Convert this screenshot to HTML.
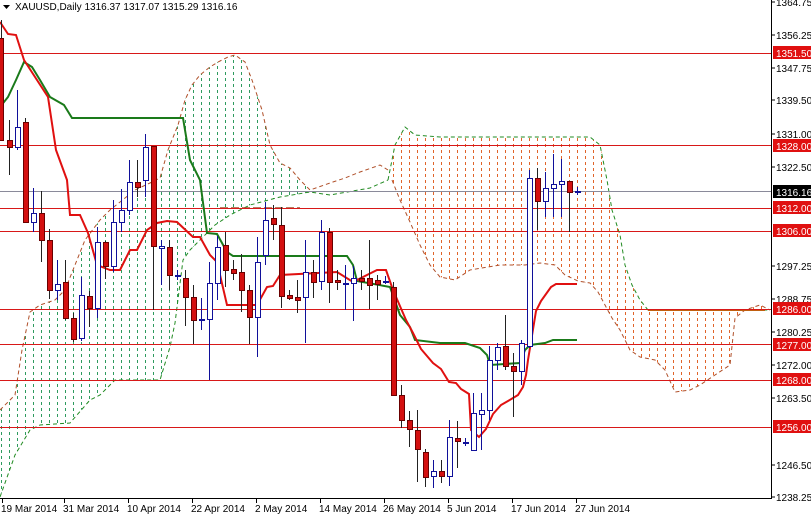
<!DOCTYPE html>
<html><head><meta charset="utf-8"><style>
html,body{margin:0;padding:0;background:#fff;}
svg{display:block;font-family:"Liberation Sans",sans-serif;}
</style></head><body>
<svg width="811" height="516" viewBox="0 0 811 516" xmlns="http://www.w3.org/2000/svg">
<defs>
<pattern id="pg" x="0" y="0" width="8" height="6" patternUnits="userSpaceOnUse"><rect x="1" y="0" width="1" height="3" fill="#2e9a5e"/></pattern>
<pattern id="pr" x="0" y="0" width="8" height="6" patternUnits="userSpaceOnUse"><rect x="1" y="0" width="1" height="3" fill="#e0642a"/></pattern>
</defs>
<rect width="811" height="516" fill="#fff"/>
<polygon fill="url(#pg)" points="0,410 15,395 22,350 30,312 40,305 55,300 65,290 75,265 85,240 100,220 110,210 135,190 150,183 160,178 168,150 178,125 185,100 192,85 200,75 210,67 218,62 228,57 235,55 245,62 252,80 262,110 270,145 280,163 290,168 300,180 310,190 310,192 280,197 250,205 230,215 215,225 200,240 190,250 183,260 175,323 170,347 160,380 115,380 100,395 90,400 70,423 40,425 30,430 15,455 0,497"/>
<polygon fill="url(#pr)" points="388,180 395,145 405,127 415,135 440,137 590,137 600,145 607,180 612,210 620,235 625,265 632,285 640,300 648,310 770,310 760,305 745,310 735,318 730,365 715,375 700,385 690,390 675,392 665,370 655,360 640,357 630,350 620,330 612,318 605,305 598,292 590,283 578,281 565,275 555,265 540,263 525,265 500,265 470,270 455,280 440,277 430,265 420,245 410,222 400,200 392,180"/>
<g fill="none" stroke-width="1" stroke-dasharray="4,3">
<polyline stroke="#b0502a" points="0,410 15,395 22,350 30,312 40,305 55,300 65,290 75,265 85,240 100,220 110,210 135,190 150,183 160,178 168,150 178,125 185,100 192,85 200,75 210,67 218,62 228,57 235,55 245,62 252,80 262,110 270,145 280,163 290,168 300,180 310,190 330,183 345,178 360,172 380,165 388,170"/>
<polyline stroke="#228b22" points="0,497 15,455 30,430 40,425 70,423 90,400 100,395 115,380 160,380 170,347 175,323 183,260 190,250 200,240 215,225 230,215 250,205 280,197 310,192 330,195 370,188 388,180"/>
<polyline stroke="#228b22" points="388,180 395,145 405,127 415,135 440,137 590,137 600,145 607,180 612,210 620,235 625,265 632,285 640,300 648,310 770,310"/>
<polyline stroke="#b0502a" points="392,180 400,200 410,222 420,245 430,265 440,277 455,280 470,270 500,265 525,265 540,263 555,265 565,275 578,281 590,283 598,292 605,305 612,318 620,330 630,350 640,357 655,360 665,370 675,392 690,390 700,385 715,375 730,365 735,318 745,310 760,305 770,310"/>
</g>
<line x1="648" y1="310" x2="765" y2="310" stroke="#c06010" stroke-width="2"/>
<line x1="220" y1="208" x2="300" y2="208" stroke="#a0522d" stroke-width="1.5" stroke-dasharray="8,3"/>
<g fill="#d81818">
<rect x="0" y="53" width="771" height="1"/><rect x="0" y="145" width="771" height="1"/>
<rect x="0" y="208" width="771" height="1"/><rect x="0" y="231" width="771" height="1"/>
<rect x="0" y="309" width="771" height="1"/><rect x="0" y="344" width="771" height="1"/>
<rect x="0" y="380" width="771" height="1"/><rect x="0" y="427" width="771" height="1"/>
</g>
<rect x="0" y="191" width="771" height="1" fill="#8a8a9a"/>
<polyline fill="none" stroke="#1a7a1a" stroke-width="2" points="0,107 8,97 16,80 24,62 32,67 40,80 50,97 64,105 72,118 183,118 190,160 200,180 207,233 217,234 227,252 233,256 347,256 353,265 357,281 390,287 400,315 410,327 415,340 440,343 465,343 480,348 487,355 490,365 520,363 525,350 530,345 545,343 553,340 577,340"/>
<polyline fill="none" stroke="#e01010" stroke-width="2" points="0,22 8,34 16,35 24,60 48,97 56,150 67,180 70,215 80,215 88,233 97,265 110,270 120,270 130,250 137,250 147,230 157,223 167,221 177,222 193,237 200,237 210,255 217,262 227,305 257,305 267,287 273,286 280,275 337,272 353,282 377,270 386,270 393,290 406,320 413,333 421,349 433,363 441,369 449,382 456,383 461,389 469,394 471,430 479,437 486,429 493,414 501,405 508,401 518,395 523,387 526,375 528,360 536,311 541,301 551,287 556,284 577,284"/>
<g stroke-width="1">
<path stroke="#222" d="M1.5 20V140M9.5 120V175M25.5 118V222M41.5 191V262M49.5 229V299M65.5 260V320M73.5 313V342M89.5 291V327M105.5 241V279M137.5 160V197M153.5 146V310M169.5 240V290M185.5 270V326M193.5 285V344M225.5 232V287M233.5 260V280M241.5 254V312M249.5 285V344M273.5 205V240M281.5 207V308M289.5 290V300M297.5 280V313M313.5 260V298M329.5 228V303M337.5 270V290M361.5 270V290M369.5 240V309M377.5 275V300M393.5 282V395M401.5 385V428M409.5 411V447M417.5 410V482M425.5 449V487M441.5 460V483M457.5 421V468M505.5 315V370M513.5 353V417M537.5 168V230M569.5 181V232"/>
<path stroke="#10109a" d="M17.5 90V150M33.5 188V232M57.5 260V300M81.5 277V341M97.5 227V318M113.5 200V272M121.5 189V232M129.5 160V215M145.5 134V197M161.5 240V285M177.5 270V280M201.5 298V330M209.5 262V380M217.5 236V300M257.5 237V357M265.5 202V265M305.5 240V343M321.5 220V290M345.5 265V310M353.5 266V321M385.5 276V284M433.5 460V488M449.5 420V486M465.5 438V446M473.5 393V450M481.5 393V450M489.5 346V420M497.5 343V370M521.5 340V385M529.5 170V348M545.5 172V217M553.5 154V217M561.5 159V217M577.5 187V195"/>
</g>
<g fill="#d41010" stroke="#6a0000" stroke-width="1">
<rect x="-1.5" y="38.5" width="5" height="102"/><rect x="7.5" y="140.5" width="5" height="7"/><rect x="23.5" y="122.5" width="5" height="100"/><rect x="39.5" y="213.5" width="5" height="27"/><rect x="47.5" y="240.5" width="5" height="50"/><rect x="63.5" y="282.5" width="5" height="36"/><rect x="71.5" y="318.5" width="5" height="21"/><rect x="87.5" y="296.5" width="5" height="12"/><rect x="103.5" y="242.5" width="5" height="24"/><rect x="135.5" y="182.5" width="5" height="5"/><rect x="151.5" y="146.5" width="5" height="100"/><rect x="167.5" y="247.5" width="5" height="28"/><rect x="183.5" y="278.5" width="5" height="19"/><rect x="191.5" y="297.5" width="5" height="23"/><rect x="223.5" y="245.5" width="5" height="25"/><rect x="231.5" y="269.5" width="5" height="4"/><rect x="239.5" y="272.5" width="5" height="18"/><rect x="247.5" y="290.5" width="5" height="27"/><rect x="271.5" y="218.5" width="5" height="6"/><rect x="279.5" y="225.5" width="5" height="71"/><rect x="287.5" y="295.5" width="5" height="3"/><rect x="295.5" y="297.5" width="5" height="3"/><rect x="311.5" y="272.5" width="5" height="10"/><rect x="327.5" y="232.5" width="5" height="50"/><rect x="335.5" y="280.5" width="5" height="2"/><rect x="359.5" y="278.5" width="5" height="3"/><rect x="367.5" y="278.5" width="5" height="7"/><rect x="375.5" y="280.5" width="5" height="4"/><rect x="391.5" y="287.5" width="5" height="108"/><rect x="399.5" y="395.5" width="5" height="25"/><rect x="407.5" y="420.5" width="5" height="9"/><rect x="415.5" y="430.5" width="5" height="19"/><rect x="423.5" y="452.5" width="5" height="25"/><rect x="439.5" y="471.5" width="5" height="5"/><rect x="455.5" y="438.5" width="5" height="3"/><rect x="503.5" y="346.5" width="5" height="20"/><rect x="511.5" y="366.5" width="5" height="5"/><rect x="535.5" y="178.5" width="5" height="23"/><rect x="567.5" y="181.5" width="5" height="11"/>
</g>
<g fill="#fff" stroke="#10109a" stroke-width="1">
<rect x="15.5" y="127.5" width="5" height="20"/><rect x="31.5" y="213.5" width="5" height="9"/><rect x="55.5" y="284.5" width="5" height="6"/><rect x="79.5" y="295.5" width="5" height="43"/><rect x="95.5" y="242.5" width="5" height="66"/><rect x="111.5" y="222.5" width="5" height="44"/><rect x="119.5" y="210.5" width="5" height="12"/><rect x="127.5" y="182.5" width="5" height="28"/><rect x="143.5" y="147.5" width="5" height="33"/><rect x="159.5" y="246.5" width="5" height="2"/><rect x="175.5" y="275.5" width="5" height="1"/><rect x="199.5" y="319.5" width="5" height="1"/><rect x="207.5" y="283.5" width="5" height="36"/><rect x="215.5" y="247.5" width="5" height="36"/><rect x="255.5" y="262.5" width="5" height="55"/><rect x="263.5" y="220.5" width="5" height="35"/><rect x="303.5" y="272.5" width="5" height="25"/><rect x="319.5" y="232.5" width="5" height="49"/><rect x="343.5" y="283.5" width="5" height="1"/><rect x="351.5" y="278.5" width="5" height="5"/><rect x="383.5" y="281.5" width="5" height="1"/><rect x="431.5" y="471.5" width="5" height="5"/><rect x="447.5" y="437.5" width="5" height="39"/><rect x="463.5" y="442.5" width="5" height="1"/><rect x="471.5" y="413.5" width="5" height="37"/><rect x="479.5" y="410.5" width="5" height="4"/><rect x="487.5" y="360.5" width="5" height="50"/><rect x="495.5" y="347.5" width="5" height="13"/><rect x="519.5" y="343.5" width="5" height="28"/><rect x="527.5" y="178.5" width="5" height="168"/><rect x="543.5" y="188.5" width="5" height="13"/><rect x="551.5" y="184.5" width="5" height="4"/><rect x="559.5" y="181.5" width="5" height="3"/><rect x="575.5" y="191.5" width="5" height="1"/>
</g>
<line x1="771.5" y1="0" x2="771.5" y2="498" stroke="#000"/>
<line x1="0" y1="498.5" x2="772" y2="498.5" stroke="#000"/>
<g stroke="#000">
<path d="M771 2H775M771 35H775M771 68H775M771 100H775M771 134H775M771 167H775M771 266H775M771 299H775M771 332H775M771 365H775M771 398H775M771 465H775M771 497H775"/>
<path d="M2.5 498V503M64.5 498V503M128.5 498V503M192.5 498V503M256.5 498V503M320.5 498V503M384.5 498V503M448.5 498V503M512.5 498V503M576.5 498V503"/>
</g>
<g font-size="10" fill="#000">
<text x="776" y="6">1364.75</text><text x="776" y="39">1356.25</text><text x="776" y="72">1347.75</text><text x="776" y="104">1339.50</text><text x="776" y="138">1331.00</text><text x="776" y="171">1322.50</text><text x="776" y="270">1297.25</text><text x="776" y="303">1288.75</text><text x="776" y="336">1280.25</text><text x="776" y="369">1272.00</text><text x="776" y="402">1263.50</text><text x="776" y="469">1246.50</text><text x="776" y="501">1238.25</text>
</g>
<g font-size="10">
<rect x="773" y="46" width="38" height="13" fill="#e01010"/><text x="776" y="57" fill="#fff">1351.50</text>
<rect x="773" y="139" width="38" height="13" fill="#e01010"/><text x="776" y="150" fill="#fff">1328.00</text>
<rect x="773" y="201" width="38" height="13" fill="#e01010"/><text x="776" y="212" fill="#fff">1312.00</text>
<rect x="773" y="224" width="38" height="13" fill="#e01010"/><text x="776" y="235" fill="#fff">1306.00</text>
<rect x="773" y="302" width="38" height="13" fill="#e01010"/><text x="776" y="313" fill="#fff">1286.00</text>
<rect x="773" y="338" width="38" height="13" fill="#e01010"/><text x="776" y="349" fill="#fff">1277.00</text>
<rect x="773" y="373" width="38" height="13" fill="#e01010"/><text x="776" y="384" fill="#fff">1268.00</text>
<rect x="773" y="420" width="38" height="13" fill="#e01010"/><text x="776" y="431" fill="#fff">1256.00</text>
<rect x="773" y="185" width="38" height="13" fill="#000"/><text x="776" y="196" fill="#fff">1316.16</text>
</g>
<g font-size="10" fill="#000">
<text x="1" y="512">19 Mar 2014</text><text x="63" y="512">31 Mar 2014</text><text x="127" y="512">10 Apr 2014</text><text x="191" y="512">22 Apr 2014</text><text x="255" y="512">2 May 2014</text><text x="319" y="512">14 May 2014</text><text x="383" y="512">26 May 2014</text><text x="447" y="512">5 Jun 2014</text><text x="511" y="512">17 Jun 2014</text><text x="575" y="512">27 Jun 2014</text>
</g>
<polygon points="3,5 10,5 6.5,9" fill="#000"/>
<text x="15" y="10" font-size="10" fill="#000">XAUUSD,Daily  1316.37 1317.07 1315.29 1316.16</text>
</svg>
</body></html>
